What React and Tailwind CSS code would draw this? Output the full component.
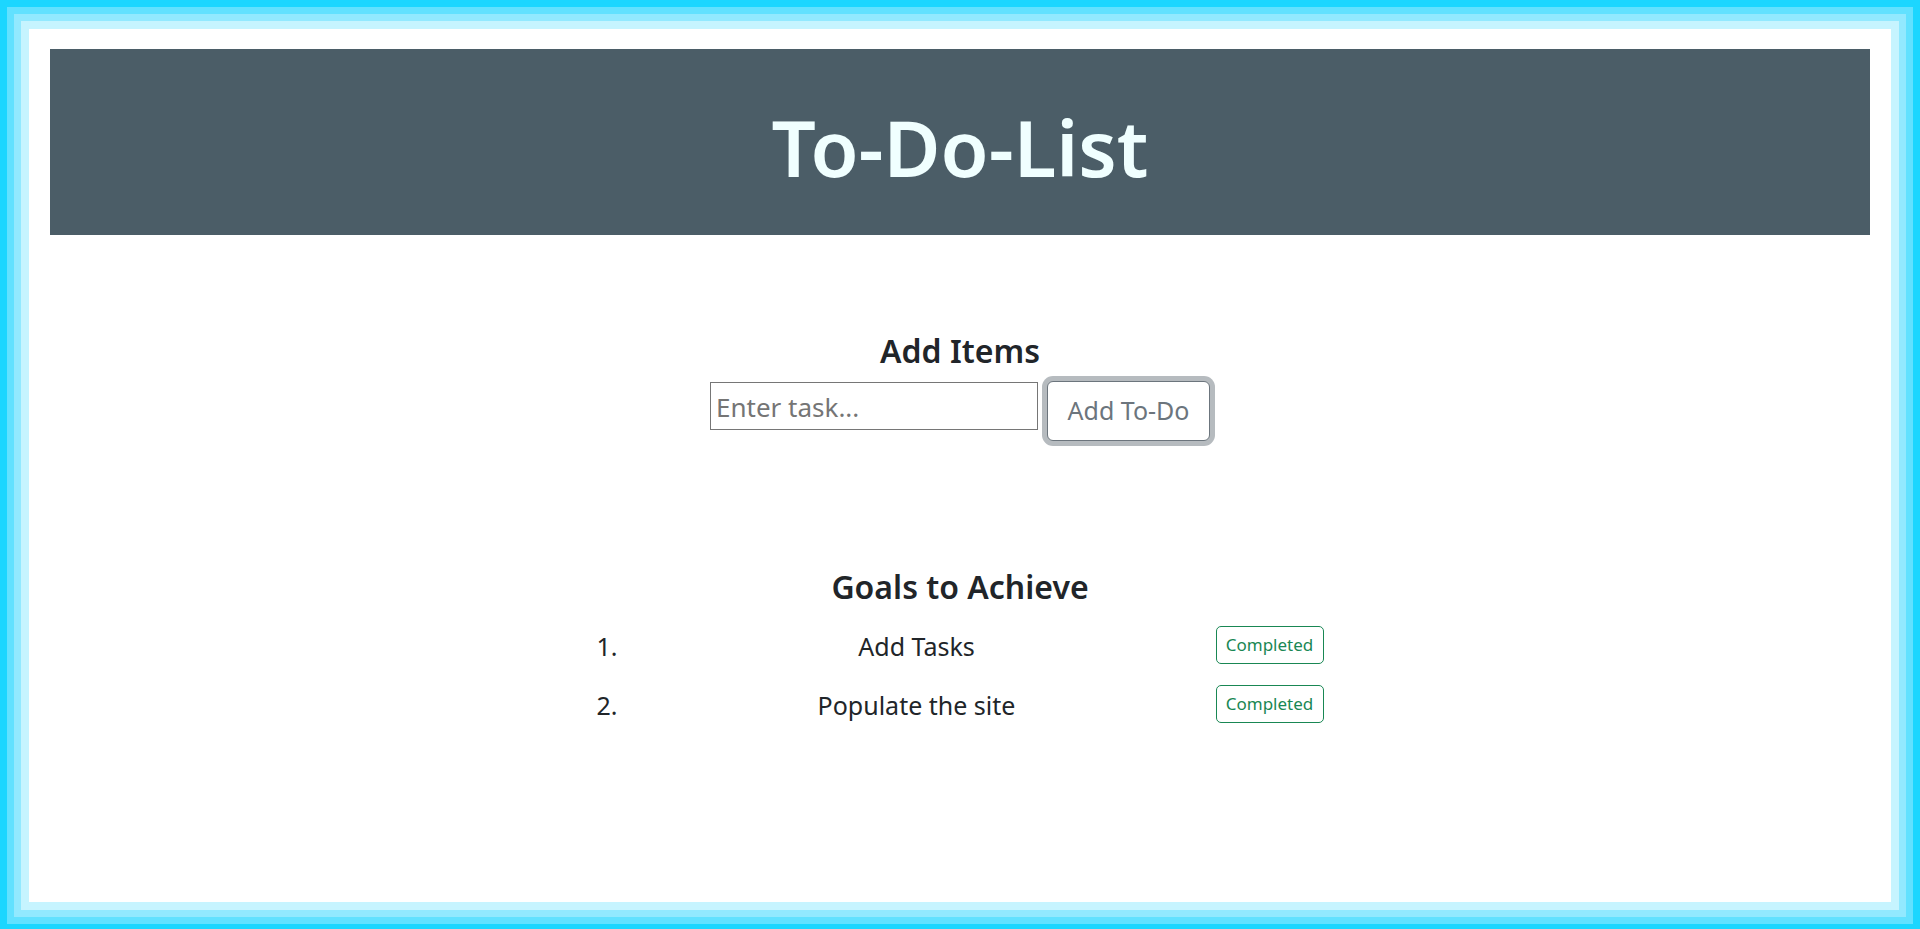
import { useState } from 'react';

const GOALS = ['Add Tasks', 'Populate the site'];

export default function App() {
  const [task, setTask] = useState('');
  const [goals, setGoals] = useState(GOALS);

  function addTodo() {
    if (!task.trim()) return;
    setGoals(g => [...g, task.trim()]);
    setTask('');
  }

  return (
    <div className="h-[931px] bg-white px-[50px] pt-[49px] text-[#212529] shadow-[inset_0_0_0_7px_#1cd6ff,inset_0_0_0_14px_#62e1ff,inset_0_0_0_21px_#92e9ff,inset_0_0_0_29px_#c6f4ff]"
         style={{ fontFamily: '"Noto Sans", "Open Sans", sans-serif' }}>

      {/* header */}
      <header className="h-[186px] bg-[#4b5d67] flex items-center justify-center">
        <h1 className="text-[78px] leading-[96px] font-semibold text-[#f0ffff] pt-[10px]">To-Do-List</h1>
      </header>

      {/* add items */}
      <section className="mt-[96px] flex flex-col items-center">
        <h3 className="text-[32px] leading-[40px] font-semibold">Add Items</h3>
        <div className="mt-[10px] flex items-start gap-[9px]">
          <input value={task} onChange={e => setTask(e.target.value)} placeholder="Enter task..."
            className="mt-[1px] w-[328px] h-[48px] border border-[#767676] px-[5px] pt-[2px] text-[26px] outline-none placeholder:text-[#757575]" />
          <button onClick={addTodo}
            className="w-[163px] h-[60px] rounded-[6px] border border-[#6c757d] bg-white text-[25px] text-[#6c757d] shadow-[0_0_0_5px_#b6bbbf]">
            Add To-Do
          </button>
        </div>
      </section>

      {/* goals */}
      <section className="mt-[126px] flex flex-col items-center">
        <h3 className="text-[32px] leading-[40px] font-semibold">Goals to Achieve</h3>
        <ol className="mt-[19px] w-[727px] flex flex-col gap-[21px]">
          {goals.map((g, i) => (
            <li key={g + i} className="h-[38px] flex items-center text-[25px]">
              <span className="pt-[4px]">{i + 1}.</span>
              <span className="flex-1 text-center pt-[4px]">{g}</span>
              <button className="w-[108px] h-[38px] rounded-[5px] border border-[#198754] text-[17px] text-[#198754] bg-white">
                Completed
              </button>
            </li>
          ))}
        </ol>
      </section>
    </div>
  );
}
